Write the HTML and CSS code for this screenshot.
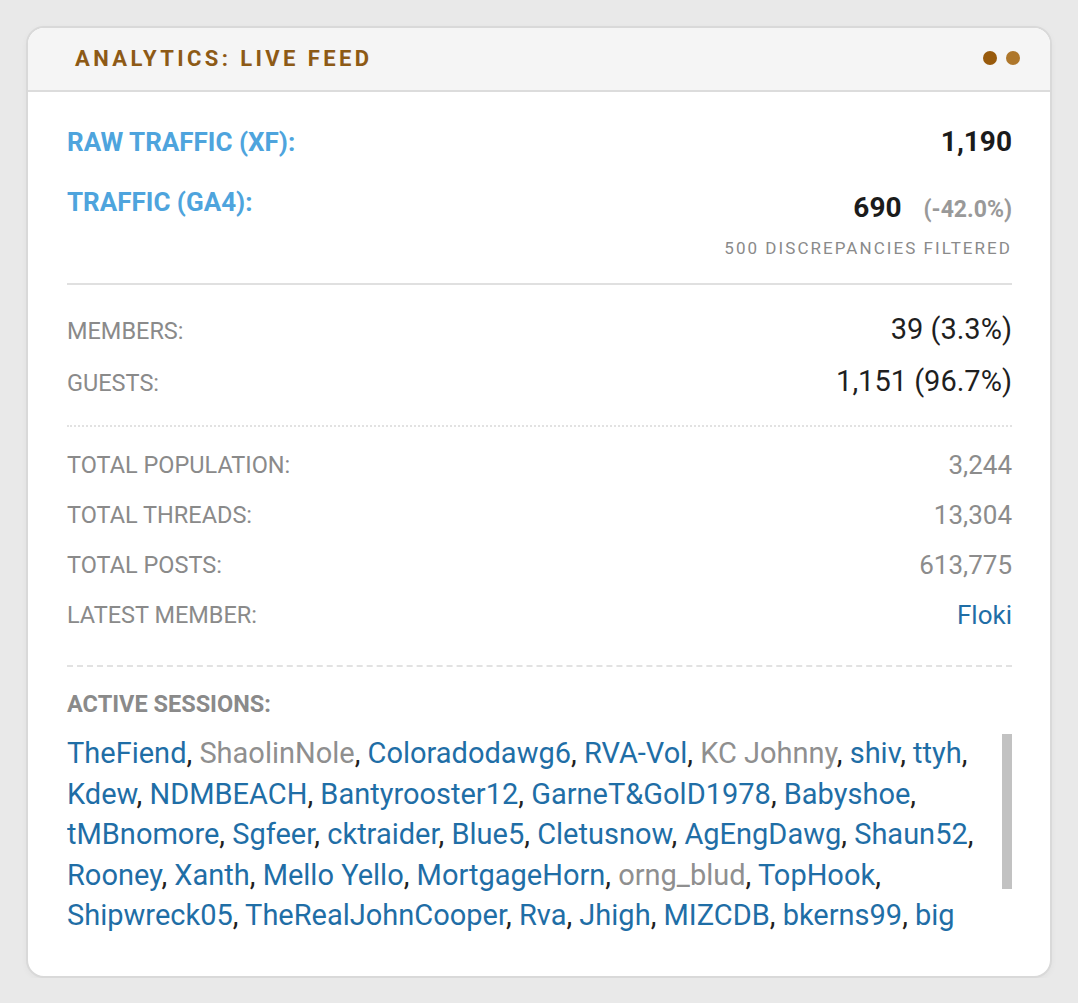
FILE: index.html
```html
<!DOCTYPE html>
<html lang="en">
<head>
  <meta charset="utf-8" />
  <meta name="viewport" content="width=device-width, initial-scale=1" />
  <title>Analytics: Live Feed</title>
  <link rel="stylesheet" href="styles.css">
</head>
<body>
  <!-- live feed widget -->
  <div class="widget">
    <div class="widget-head">
      <h2 class="widget-title">Analytics: Live Feed</h2>
      <div class="pulse">
        <span class="dot"></span>
        <span class="dot dot-light"></span>
      </div>
    </div>

    <div class="widget-body">
      <!-- traffic totals -->
      <div class="traffic">
        <div class="row">
          <span class="label-accent">RAW TRAFFIC (XF):</span>
          <span class="value-big">1,190</span>
        </div>
        <div class="row row-ga">
          <span class="label-accent">TRAFFIC (GA4):</span>
          <div class="ga-values">
            <div class="ga-line"><span class="value-big">690</span><span class="delta">(-42.0%)</span></div>
            <div class="note">500 discrepancies filtered</div>
          </div>
        </div>
      </div>

      <!-- members vs guests -->
      <div class="split">
        <div class="row">
          <span class="label">MEMBERS:</span>
          <span class="value">39 (3.3%)</span>
        </div>
        <div class="row">
          <span class="label">GUESTS:</span>
          <span class="value">1,151 (96.7%)</span>
        </div>
      </div>

      <!-- forum stats -->
      <div class="stats">
        <div class="row">
          <span class="label">TOTAL POPULATION:</span>
          <span class="value-muted">3,244</span>
        </div>
        <div class="row">
          <span class="label">TOTAL THREADS:</span>
          <span class="value-muted">13,304</span>
        </div>
        <div class="row">
          <span class="label">TOTAL POSTS:</span>
          <span class="value-muted">613,775</span>
        </div>
        <div class="row">
          <span class="label">LATEST MEMBER:</span>
          <a class="user" href="#">Floki</a>
        </div>
      </div>

      <!-- who is online -->
      <div class="sessions">
        <div class="sessions-title">ACTIVE SESSIONS:</div>
        <div class="session-box">
          <div class="session-list">
            <a class="user" href="#">TheFiend</a>, <a class="user user-off" href="#">ShaolinNole</a>, <a class="user" href="#">Coloradodawg6</a>, <a class="user" href="#">RVA-Vol</a>, <a class="user user-off" href="#">KC Johnny</a>, <a class="user" href="#">shiv</a>, <a class="user" href="#">ttyh</a>, <a class="user" href="#">Kdew</a>, <a class="user" href="#">NDMBEACH</a>, <a class="user" href="#">Bantyrooster12</a>, <a class="user" href="#">GarneT&amp;GolD1978</a>, <a class="user" href="#">Babyshoe</a>, <a class="user" href="#">tMBnomore</a>, <a class="user" href="#">Sgfeer</a>, <a class="user" href="#">cktraider</a>, <a class="user" href="#">Blue5</a>, <a class="user" href="#">Cletusnow</a>, <a class="user" href="#">AgEngDawg</a>, <a class="user" href="#">Shaun52</a>, <a class="user" href="#">Rooney</a>, <a class="user" href="#">Xanth</a>, <a class="user" href="#">Mello Yello</a>, <a class="user" href="#">MortgageHorn</a>, <a class="user user-off" href="#">orng_blud</a>, <a class="user" href="#">TopHook</a>, <a class="user" href="#">Shipwreck05</a>, <a class="user" href="#">TheRealJohnCooper</a>, <a class="user" href="#">Rva</a>, <a class="user" href="#">Jhigh</a>, <a class="user" href="#">MIZCDB</a>, <a class="user" href="#">bkerns99</a>, <a class="user" href="#">big</a>
          </div>
          <div class="scroll-track"><div class="scroll-thumb"></div></div>
        </div>
      </div>
    </div>
  </div>
</body>
</html>
```

FILE: styles.css
```css
body {
  margin: 0;
  background: #e9e9e9;
  font-family: Roboto, "Noto Sans", sans-serif;
  padding: 26px 26px 0 26px;
}
.widget {
  background: #fff;
  border: 2px solid #d9d9d9;
  border-radius: 18px;
  overflow: hidden;
  box-shadow: 0 2px 6px rgba(0, 0, 0, 0.04);
}
.widget-head {
  display: flex;
  align-items: center;
  justify-content: space-between;
  height: 64px;
  padding: 0 30px 2px 47px;
  box-sizing: border-box;
  background: #f5f5f5;
  border-bottom: 2px solid #dcdcdc;
}
.widget-title {
  margin: 0;
  font-size: 22px;
  font-weight: 700;
  letter-spacing: 3.4px;
  text-transform: uppercase;
  color: #8d5a16;
}
.pulse {
  display: flex;
  gap: 9px;
}
.dot {
  width: 14px;
  height: 14px;
  border-radius: 50%;
  background: #985a0c;
}
.dot-light {
  background: #ae772b;
}
.widget-body {
  padding: 32px 38px 40px 39px;
}
.row {
  display: flex;
  justify-content: space-between;
  align-items: baseline;
}
.traffic {
  padding-bottom: 24px;
  border-bottom: 2px solid #e0e0e0;
}
.traffic .row + .row {
  margin-top: 24px;
}
.row-ga {
  align-items: flex-start;
}
.label-accent {
  font-size: 26px;
  font-weight: 700;
  color: #4ea4dd;
  line-height: 36px;
}
.value-big {
  font-size: 28px;
  font-weight: 700;
  color: #1b1b1b;
  line-height: 36px;
}
.ga-values {
  text-align: right;
}
.ga-line {
  line-height: 48px;
}
.ga-line .value-big {
  line-height: 48px;
}
.delta {
  margin-left: 22px;
  font-size: 23px;
  font-weight: 700;
  color: #999;
}
.note {
  margin-top: 1px;
  font-size: 17px;
  line-height: 22px;
  letter-spacing: 2.05px;
  text-transform: uppercase;
  color: #8a8a8a;
}
.split {
  padding: 26px 0 24px;
  border-bottom: 2px dotted #e2e2e2;
}
.split .row + .row {
  margin-top: 14px;
}
.label {
  font-size: 23.5px;
  color: #8a8a8a;
  line-height: 36px;
}
.value {
  font-size: 29px;
  color: #1f1f1f;
  line-height: 36px;
}
.stats {
  padding: 13px 0 25px;
  border-bottom: 2px dashed #e2e2e2;
}
.stats .row {
  height: 50px;
  align-items: center;
}
.value-muted {
  font-size: 26px;
  color: #8c8c8c;
  line-height: 36px;
}
.user {
  color: #1f6ea6;
  text-decoration: none;
}
.stats .user {
  font-size: 26px;
  line-height: 36px;
}
.user-off {
  color: #8f8f8f;
}
.sessions {
  padding-top: 22px;
}
.sessions-title {
  font-size: 23.5px;
  line-height: 30px;
  font-weight: 700;
  color: #8a8a8a;
  margin-bottom: 14px;
}
.session-box {
  display: flex;
  height: 203px;
}
.session-list {
  flex: 1;
  overflow: hidden;
  font-size: 29px;
  line-height: 40.5px;
  color: #222;
}
.scroll-track {
  width: 10px;
  padding-top: 1px;
}
.scroll-thumb {
  height: 155px;
  background: #c2c2c2;
}
```
